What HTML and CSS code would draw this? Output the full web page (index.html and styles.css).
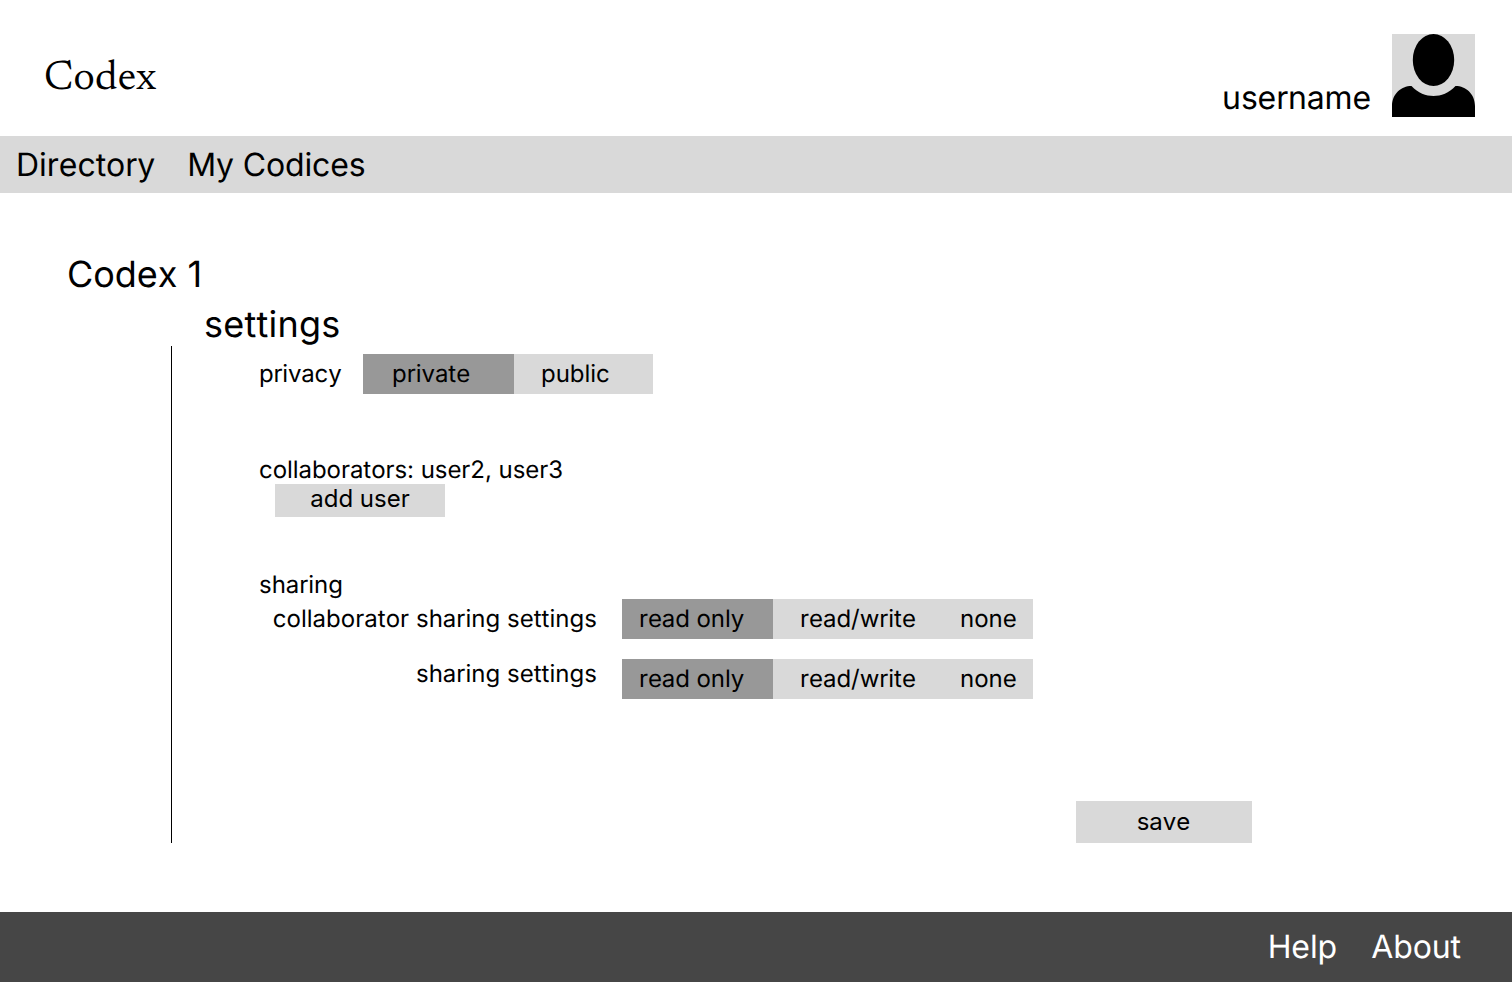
FILE: index.html
```html
<!DOCTYPE html>
<html lang="en">
<head>
<meta charset="utf-8">
<title>Codex</title>
<link rel="stylesheet" href="styles.css">
</head>
<body>
<header class="header">
  <div class="logo">Codex</div>
  <div class="account">
    <span class="username">username</span>
    <svg class="avatar" viewBox="0 0 83 83" aria-hidden="true">
      <rect width="83" height="83" fill="#d9d9d9"/>
      <ellipse cx="41.500" cy="26" rx="20.700" ry="26"/>
      <path d="M0 83V72C0 60 9 52 19.500 52C26 59 34 62 41.500 62S57 59 63.500 52C74 52 83 60 83 72V83Z"/>
    </svg>
  </div>
</header>
<nav class="nav"><a>Directory</a><a class="codices">My Codices</a></nav>
<main class="main">
  <h1 class="title">Codex 1</h1>
  <h2 class="subtitle">settings</h2>
  <section class="panel">
    <div class="row privacy">
      <span class="label">privacy</span>
      <div class="toggle"><span class="option option-on private">private</span><span class="option public">public</span></div>
    </div>
    <div class="collaborators">collaborators: user2, user3</div>
    <button class="add">add user</button>
    <div class="sharing">sharing</div>
    <div class="row share">
      <span class="label share-label">collaborator sharing settings</span>
      <div class="toggle"><span class="option option-on read">read only</span><span class="option write">read/write</span><span class="option none">none</span></div>
    </div>
    <div class="row share">
      <span class="label share-label raised">sharing settings</span>
      <div class="toggle"><span class="option option-on read">read only</span><span class="option write">read/write</span><span class="option none">none</span></div>
    </div>
    <button class="save">save</button>
  </section>
</main>
<footer class="footer"><a>Help</a><a>About</a></footer>
</body>
</html>
```
FILE: styles.css
```css
* { box-sizing: border-box; }
body {
  margin: 0;
  height: 982px;
  display: flex;
  flex-direction: column;
  background: #fff;
  color: #000;
  font-family: Inter, sans-serif;
  font-size: 24px;
  font-weight: 400;
  font-kerning: none;
  text-rendering: geometricPrecision;
  line-height: 29px;
  letter-spacing: -0.03px;
  white-space: nowrap;
}
.header {
  height: 136px;
  padding: 34px 37px 0 44px;
  display: flex;
  justify-content: space-between;
}
.logo {
  padding-top: 19px;
  font: 42px/54px Newsreader, "Crimson Text", "Liberation Serif", serif;
  letter-spacing: 0.4px;
}
.account { display: flex; gap: 21px; }
.username { padding-top: 44px; font-size: 32px; line-height: 39px; letter-spacing: -0.15px; }
.avatar { width: 83px; height: 83px; }
.nav {
  height: 57px;
  padding: 9px 16px;
  display: flex;
  gap: 32px;
  background: #d9d9d9;
  font-size: 32px;
  line-height: 39px;
}
.codices { letter-spacing: -0.15px; }
.main { height: 719px; padding-top: 59px; }
.title, .subtitle { margin: 0; font-size: 36px; line-height: 44px; font-weight: 400; }
.title { padding-left: 67px; }
.subtitle { padding: 6px 0 0 204px; letter-spacing: 0.25px; }
.panel {
  height: 497px;
  margin-left: 171px;
  padding: 8px 260px 0 87px;
  border-left: 1px solid #000;
  display: flex;
  flex-direction: column;
}
.row { display: flex; height: 40px; }
.label { padding-top: 5px; }
.privacy .label { width: 104px; letter-spacing: -0.18px; }
.toggle { display: flex; background: #d9d9d9; }
.option { padding-top: 5px; }
.option-on { background: #989898; }
.private { width: 151px; padding-left: 29px; }
.public { width: 139px; padding-left: 27px; }
.collaborators { margin-top: 61px; letter-spacing: -0.05px; }
.add, .save {
  border: 0;
  padding: 0;
  background: #d9d9d9;
  color: inherit;
  font: inherit;
}
.add { width: 170px; height: 33px; margin-left: 16px; padding-bottom: 4px; }
.sharing { margin-top: 53px; }
.share { margin-bottom: 20px; }
.share-label { width: 338px; margin-right: 25px; text-align: right; letter-spacing: 0.03px; }
.raised { padding-top: 0; }
.read { width: 151px; padding-left: 17px; letter-spacing: -0.08px; }
.write { width: 160px; padding-left: 27px; }
.none { width: 100px; padding-left: 27px; }
.save { width: 176px; height: 42px; margin-top: auto; padding: 0 1px 2px 0; align-self: flex-end; }
.footer {
  height: 70px;
  padding: 15px 51px 0 0;
  display: flex;
  justify-content: flex-end;
  gap: 34px;
  background: #464646;
  color: #fff;
  font-size: 32px;
  line-height: 39px;
  letter-spacing: -0.08px;
}
```
